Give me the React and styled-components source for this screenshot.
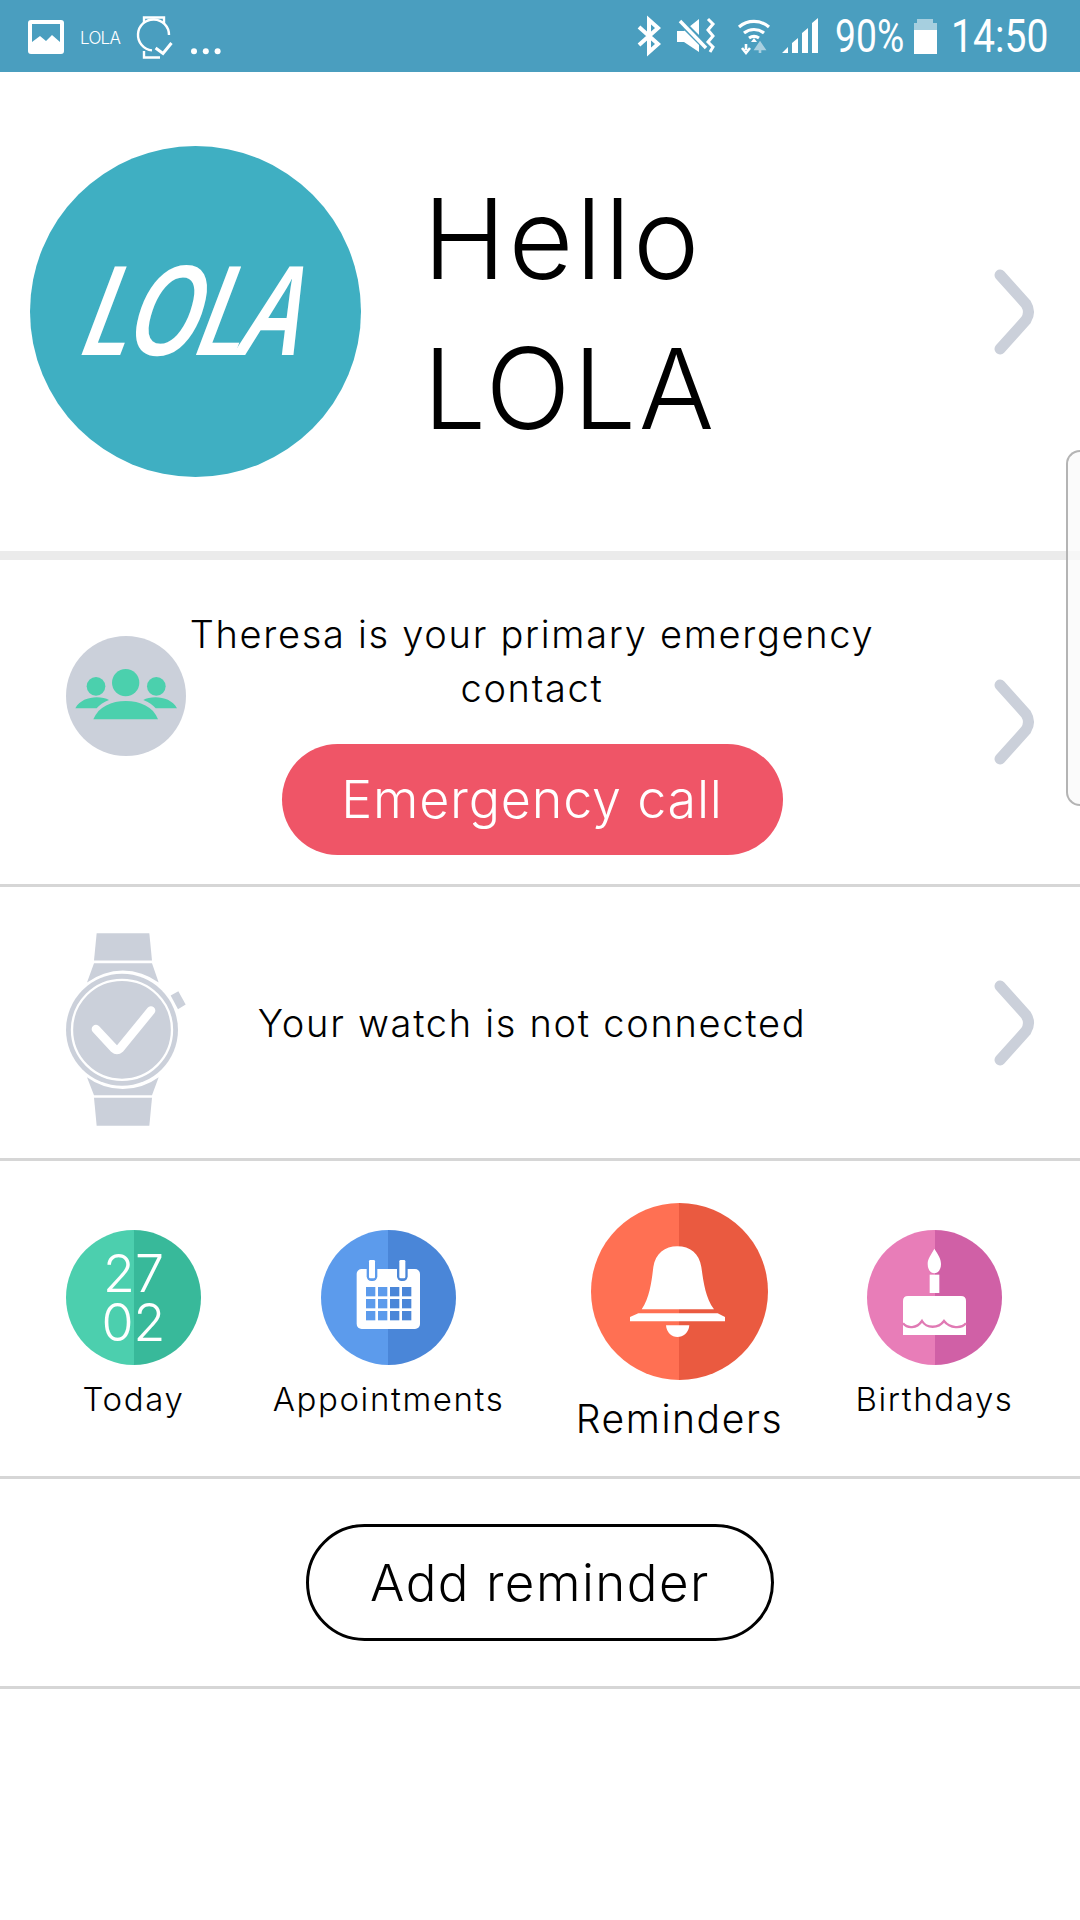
import React from "react";
import styled, { createGlobalStyle } from "styled-components";

const Global = createGlobalStyle`
  html, body { margin: 0; padding: 0; background: #fff; }
  #root { width: 1080px; height: 1920px; }
  * { box-sizing: border-box; }
`;

const FONT = `"Inter", "Lato", sans-serif`;

const Page = styled.div`
  position: relative;
  width: 1080px;
  height: 1920px;
  overflow: hidden;
  background: #fff;
  color: #000;
  font-family: ${FONT};
  font-weight: 300;
`;

const StatusBar = styled.header`
  height: 72px;
  background: #4a9ebf;
  color: #fff;
`;
const StatusArt = styled.svg`
  display: block;
  position: absolute;
  left: 0;
  top: 0;
  pointer-events: none;
`;
const StatusInner = styled.div`
  position: relative;
  height: 72px;
  display: flex;
  align-items: center;
  justify-content: space-between;
`;
const AppTag = styled.span`
  margin-left: 80px;
  margin-top: 3px;
  font-size: 17px;
  font-weight: 300;
  letter-spacing: -0.7px;
`;
const Clock = styled.div`
  display: flex;
  align-items: center;
  font-family: "Roboto", sans-serif;
  font-weight: 400;
  font-size: 46px;
  line-height: 72px;
`;
const Narrow = styled.span`
  display: inline-block;
  width: ${p => p.$w}px;
  margin-left: ${p => p.$ml}px;
  white-space: nowrap;
  transform: scaleX(${p => p.$sx});
  transform-origin: left center;
`;

const Hero = styled.section`
  height: 479px;
  display: flex;
  align-items: center;
  padding: 0 45px 0 30px;
`;
const Avatar = styled.div`
  flex: none;
  width: 331px;
  height: 331px;
  border-radius: 50%;
  background: #3fafc2;
  display: flex;
  align-items: center;
  justify-content: center;
  color: #fff;
`;
const LogoText = styled.span`
  display: inline-block;
  font-family: "Open Sans", sans-serif;
  font-style: italic;
  font-weight: 600;
  font-size: 124px;
  line-height: 1;
  letter-spacing: -6px;
  transform: scaleX(0.82) skewX(-14deg);
  margin-top: -10px;
`;
const Greeting = styled.h1`
  margin: 2px 0 0 62px;
  font-weight: 300;
  font-size: 112px;
  line-height: 150px;
  letter-spacing: 2.5px;
`;
const Chevron = styled.svg`
  flex: none;
  margin-left: auto;
  width: 41px;
  height: 86px;
`;

const ThickRule = styled.hr`
  margin: 0;
  border: 0;
  height: 9px;
  background: #ebebeb;
`;
const Rule = styled.hr`
  margin: 0;
  border: 0;
  height: 3px;
  background: #d6d6d6;
`;

const Row = styled.section`
  height: ${p => p.$h}px;
  display: flex;
  align-items: center;
  padding: 0 45px 0 66px;
`;
const GroupDisc = styled.div`
  flex: none;
  width: 120px;
  height: 120px;
  margin-bottom: 52px;
  border-radius: 50%;
  background: #cbd0da;
  overflow: hidden;
`;
const IconFill = styled.svg`
  display: block;
  width: 100%;
  height: 100%;
`;
const WatchIcon = styled.svg`
  flex: none;
  width: 120px;
  height: 193px;
  margin-top: 13px;
`;
const Center = styled.div`
  flex: none;
  width: 692px;
  padding-top: ${p => p.$top || 0}px;
  display: flex;
  flex-direction: column;
  align-items: center;
  text-align: center;
`;
const Sentence = styled.p`
  margin: 0;
  font-size: 38px;
  line-height: 54px;
  letter-spacing: 1.7px;
  white-space: nowrap;
`;
const CallButton = styled.button`
  width: 501px;
  height: 111px;
  margin-top: 29px;
  border: 0;
  border-radius: 56px;
  background: #ef5567;
  color: #fff;
  font-family: ${FONT};
  font-weight: 300;
  font-size: 52px;
  letter-spacing: 0.8px;
`;

const Shortcuts = styled.section`
  height: 315px;
  display: grid;
  grid-template-columns: 267px 243px 339px 171px;
  align-items: start;
`;
const Shortcut = styled.div`
  display: flex;
  flex-direction: column;
  align-items: center;
  padding-top: ${p => (p.$big ? 42 : 69)}px;
`;
const Disc = styled.div`
  width: ${p => p.$size}px;
  height: ${p => p.$size}px;
  border-radius: 50%;
  background: linear-gradient(90deg, ${p => p.$a} 50%, ${p => p.$b} 50%);
  overflow: hidden;
  display: flex;
  flex-direction: column;
  align-items: center;
  justify-content: center;
`;
const DateText = styled.span`
  color: #fff;
  font-size: 52px;
  line-height: 49px;
  font-weight: 300;
`;
const Label = styled.span`
  margin-top: ${p => (p.$big ? 15 : 10)}px;
  font-size: ${p => (p.$big ? 39 : 33)}px;
  line-height: 48px;
  letter-spacing: 1.6px;
  white-space: nowrap;
`;

const AddRow = styled.section`
  height: 207px;
  display: flex;
  align-items: center;
  padding-left: 306px;
`;
const AddButton = styled.button`
  width: 468px;
  height: 117px;
  background: #fff;
  border: 3px solid #000;
  border-radius: 59px;
  color: #000;
  font-family: ${FONT};
  font-weight: 300;
  font-size: 51px;
  letter-spacing: 1.5px;
`;

const EdgeHandle = styled.div`
  position: absolute;
  top: 450px;
  right: 0;
  width: 14px;
  height: 356px;
  background: rgba(250, 250, 250, 0.75);
  border: 2px solid #b4b4b4;
  border-right: 0;
  border-radius: 22px 0 0 22px;
`;

const Arrow = () => (
  <Chevron viewBox="0 0 41 86" fill="none" stroke="#cbd0da" strokeWidth="11" strokeLinecap="round" strokeLinejoin="round">
    <path d="M6 6 L32 35 Q37 43 32 51 L6 80" />
  </Chevron>
);

const StatusIcons = () => (
  <StatusArt width="1080" height="72" viewBox="0 0 1080 72">
    <rect x="28" y="20" width="36" height="34" rx="3" fill="#fff" />
    <path d="M32 24 H60 V42 L52 35 L46 41 L40 36 L32 42 Z" fill="#4a9ebf" />
    <g fill="none" stroke="#fff" strokeWidth="2.4">
      <path d="M169 35 A15.5 15.5 0 1 0 152 50.4" />
      <path d="M144 23 V17.5 H164 V23" />
      <path d="M144 51 V57.5 H160" />
      <path d="M155.6 48 L163 53.4 L171.5 43" strokeWidth="3" />
    </g>
    <g fill="#fff">
      <circle cx="194" cy="51.3" r="3" />
      <circle cx="205.8" cy="51.3" r="3" />
      <circle cx="217.6" cy="51.3" r="3" />
    </g>
    <path d="M639 27 L658 44 L649 52 V20 L658 28 L639 45" fill="none" stroke="#fff" strokeWidth="4" />
    <path d="M677 31 H684 L699 19 V52 L684 42 H677 Z" fill="#fff" />
    <path d="M680 21 L708 49" stroke="#4a9ebf" strokeWidth="7" />
    <path d="M680 21 L706 48" stroke="#fff" strokeWidth="3.5" />
    <path d="M708 19 L713 24 L708 30 L713 36 L708 42 L713 47 L710 52" fill="none" stroke="#fff" strokeWidth="3" />
    <g fill="none" stroke="#fff" strokeWidth="3.2">
      <path d="M739 27 A23 23 0 0 1 769 27" />
      <path d="M744 33 A16 16 0 0 1 764 33" />
      <path d="M749 38 A9 9 0 0 1 759 38" />
    </g>
    <path d="M751 42 L754 38 L757 42 Z" fill="#fff" />
    <path d="M746 44 V50 M742 48 L746 53 L750 48" fill="none" stroke="#fff" strokeWidth="2.6" />
    <path d="M760 53 V47 M756 49 L760 43 L764 49 Z" fill="#a9d0e0" stroke="#a9d0e0" strokeWidth="2.6" />
    <path d="M782 53 L788 47 V53 Z M792 53 V43 L798 38 V53 Z M802 53 V33 L808 28 V53 Z M812 53 V23 L818 18 V53 Z" fill="#fff" />
    <path d="M917 19 H933 V23 H937 V30 H914 V23 H917 Z" fill="#a6cfdf" />
    <rect x="914" y="30" width="23" height="24" fill="#fff" />
  </StatusArt>
);

export default function App() {
  return (
    <Page>
      <Global />
      <StatusBar>
        <StatusInner>
          <StatusIcons />
          <AppTag>LOLA</AppTag>
          <Clock>
            <Narrow $w={79} $ml={0} $sx={0.81}>90%</Narrow>
            <Narrow $w={129} $ml={37} $sx={0.85}>14:50</Narrow>
          </Clock>
        </StatusInner>
      </StatusBar>

      <Hero>
        <Avatar>
          <LogoText>LOLA</LogoText>
        </Avatar>
        <Greeting>
          Hello
          <br />
          LOLA
        </Greeting>
        <Arrow />
      </Hero>
      <ThickRule />

      <Row $h={324}>
        <GroupDisc>
          <IconFill viewBox="78 78 360 360" fill="#4bd0ad">
            <circle cx="257" cy="218" r="41" />
            <path d="M160 328 C175 290 215 273 257 273 C300 273 340 290 354 328 Z" />
            <circle cx="168" cy="229" r="28" />
            <path d="M106 295 C118 272 145 262 170 262 C185 262 198 265 207 270 C190 277 178 285 170 295 Z" />
            <circle cx="349" cy="229" r="28" />
            <path d="M411 295 C399 272 372 262 347 262 C332 262 319 265 310 270 C327 277 339 285 347 295 Z" />
          </IconFill>
        </GroupDisc>
        <Center $top={18}>
          <Sentence>
            Theresa is your primary emergency
            <br />
            contact
          </Sentence>
          <CallButton>Emergency call</CallButton>
        </Center>
        <Arrow />
      </Row>
      <Rule />

      <Row $h={271}>
        <WatchIcon viewBox="78 98 360 578">
          <g fill="#cbd0da">
            <path d="M170 98 H328 L336 180 H162 Z" />
            <path d="M162 188 H336 L356 246 A180 180 0 0 0 141 246 Z" />
            <path d="M170 676 H328 L336 592 H162 Z" />
            <path d="M162 584 H336 L356 530 A180 180 0 0 1 141 530 Z" />
            <path d="M392 285 L415 272 L437 312 L414 326 Z" />
            <circle cx="246" cy="388" r="168" />
          </g>
          <circle cx="246" cy="388" r="150" fill="none" stroke="#fff" strokeWidth="7" />
          <path d="M168 386 L222 444 Q231 452 240 444 L333 330" fill="none" stroke="#fff" strokeWidth="26" strokeLinecap="round" strokeLinejoin="round" />
        </WatchIcon>
        <Center>
          <Sentence>Your watch is not connected</Sentence>
        </Center>
        <Arrow />
      </Row>
      <Rule />

      <Shortcuts>
        <Shortcut>
          <Disc $size={135} $a="#4ccfae" $b="#38b99a">
            <DateText>27</DateText>
            <DateText>02</DateText>
          </Disc>
          <Label>Today</Label>
        </Shortcut>
        <Shortcut>
          <Disc $size={135} $a="#5c9bec" $b="#4a86d8">
            <IconFill viewBox="843 120 405 405">
              <rect x="950" y="237" width="190" height="180" rx="15" fill="#fff" />
              <rect x="980" y="215" width="32" height="58" rx="14" fill="#5c9bec" />
              <rect x="1071" y="215" width="32" height="58" rx="14" fill="#4a86d8" />
              <rect x="987" y="210" width="18" height="55" rx="4" fill="#fff" />
              <rect x="1078" y="210" width="18" height="55" rx="4" fill="#fff" />
              <g fill="#5c9bec">
                {[978, 1014].map(x => [291, 327, 363].map(y => <rect key={x + "-" + y} x={x} y={y} width="28" height="28" />))}
              </g>
              <g fill="#4a86d8">
                {[1050, 1086].map(x => [291, 327, 363].map(y => <rect key={x + "-" + y} x={x} y={y} width="28" height="28" />))}
              </g>
            </IconFill>
          </Disc>
          <Label>Appointments</Label>
        </Shortcut>
        <Shortcut $big>
          <Disc $size={177} $a="#ff7053" $b="#ea5a40">
            <IconFill viewBox="63 38 531 531" fill="#fff">
              <path d="M215 357 C240 320 245 270 250 230 C256 190 285 168 322 168 C360 168 388 190 394 230 C400 270 405 320 432 357 Z" />
              <path d="M205 369 H443 L465 380 V393 H180 V380 Z" />
              <path d="M288 405 H358 C356 428 340 440 322 440 C305 440 290 428 288 405 Z" />
            </IconFill>
          </Disc>
          <Label $big>Reminders</Label>
        </Shortcut>
        <Shortcut>
          <Disc $size={135} $a="#e87db8" $b="#d060a6">
            <IconFill viewBox="891 120 405 405" fill="#fff">
              <path d="M1093 176 C1105 195 1113 205 1113 222 C1113 240 1103 250 1093 250 C1083 250 1073 240 1073 222 C1073 205 1083 195 1093 176 Z" />
              <rect x="1079" y="254" width="29" height="55" />
              <path d="M1014 318 H1173 Q1188 318 1188 333 V435 H999 V333 Q999 318 1014 318 Z" />
              <path d="M999 400 C1012 416 1040 416 1056 393 C1070 416 1105 416 1122 393 C1140 416 1175 416 1188 400" fill="none" stroke="#e07ab4" strokeWidth="7" />
            </IconFill>
          </Disc>
          <Label>Birthdays</Label>
        </Shortcut>
      </Shortcuts>
      <Rule />

      <AddRow>
        <AddButton>Add reminder</AddButton>
      </AddRow>
      <Rule />

      <EdgeHandle />
    </Page>
  );
}
